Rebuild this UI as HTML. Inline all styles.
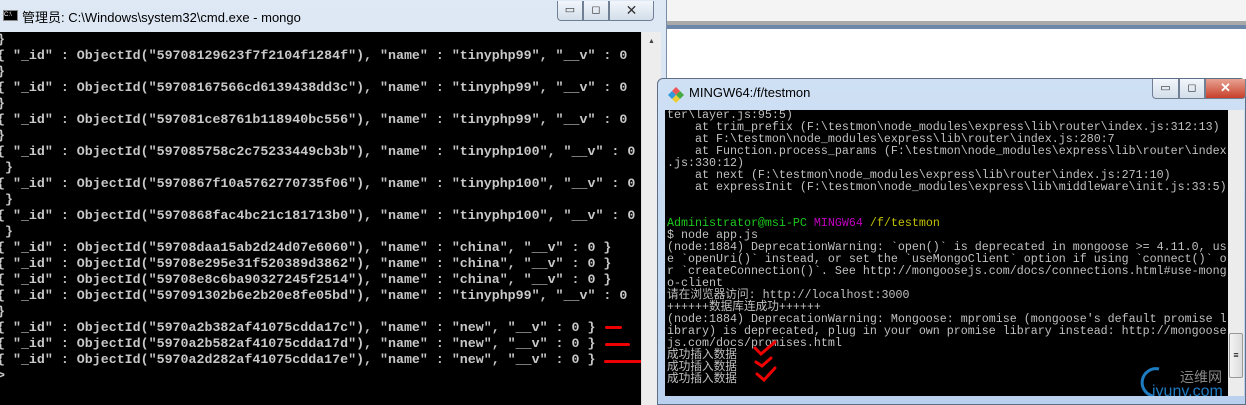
<!DOCTYPE html>
<html><head><meta charset="utf-8"><style>
*{margin:0;padding:0;box-sizing:border-box}
body{width:1246px;height:405px;overflow:hidden;position:relative;background:#fff;font-family:"Liberation Sans","Noto Sans CJK SC",sans-serif}
.abs{position:absolute}
#cmd{left:0;top:0;width:667px;height:405px;background:linear-gradient(#dfe9f5,#c4d6ec);border-right:1px solid #7a8ea8}
#cmdtitle{left:22px;top:7px;font-size:13px;color:#000}
#cmdbody{left:0;top:32px;width:641px;height:373px;background:#000;overflow:hidden}
#cmdbody pre{font-family:"Liberation Mono",monospace;font-size:13.3px;line-height:16px;color:#c8c8c8;position:absolute;left:-3px;top:0;font-weight:bold;letter-spacing:0}
#cmdsb{left:641px;top:32px;width:20px;height:373px;background:#ededed;border-left:1px solid #ddd}
.btn{position:absolute;top:1px;height:20px;border:1px solid #6f7f94;border-top:none;background:linear-gradient(#f2f6fb,#d3deea);font-size:11px;text-align:center;line-height:18px;color:#333}
#mg{left:657px;top:78px;width:589px;height:327px;background:linear-gradient(#cfe0f4,#b9d1ee);border:1px solid #5d6f86;border-radius:6px 6px 0 0}
#mgbody{left:665px;top:110px;width:563px;height:286px;background:#000;overflow:hidden}
#mgbody pre{font-family:"Liberation Mono","Noto Sans CJK SC",monospace;font-size:11.67px;line-height:12px;color:#c0c0c0;position:absolute;left:2px;top:-1px}
#mgsb{left:1228px;top:110px;width:16px;height:286px;background:#ececec}
</style></head><body>
<div class="abs" style="left:667px;top:0;width:579px;height:21px;background:#f4f4f4"></div>
<div class="abs" style="left:667px;top:21px;width:579px;height:4px;background:#a9a9a9"></div>
<div class="abs" style="left:667px;top:25px;width:579px;height:4px;background:#6d87aa"></div>

<div id="cmd" class="abs">
 <div class="abs" style="left:3px;top:10px;width:15px;height:11px;background:#000;border:1px solid #888;font-size:6px;color:#fff;line-height:9px">C:\</div>
 <div id="cmdtitle" class="abs">管理员: C:\Windows\system32\cmd.exe - mongo</div>
 <div class="btn" style="left:557px;width:26px;border-radius:0 0 0 4px">▭</div>
 <div class="btn" style="left:583px;width:26px">◻</div>
 <div class="btn" style="left:609px;width:45px;border-radius:0 0 4px 0;font-size:14px">✕</div>
 <div id="cmdbody" class="abs"><pre>}
{ "_id" : ObjectId("59708129623f7f2104f1284f"), "name" : "tinyphp99", "__v" : 0
}
{ "_id" : ObjectId("59708167566cd6139438dd3c"), "name" : "tinyphp99", "__v" : 0
}
{ "_id" : ObjectId("597081ce8761b118940bc556"), "name" : "tinyphp99", "__v" : 0
}
{ "_id" : ObjectId("597085758c2c75233449cb3b"), "name" : "tinyphp100", "__v" : 0
 }
{ "_id" : ObjectId("5970867f10a5762770735f06"), "name" : "tinyphp100", "__v" : 0
 }
{ "_id" : ObjectId("5970868fac4bc21c181713b0"), "name" : "tinyphp100", "__v" : 0
 }
{ "_id" : ObjectId("59708daa15ab2d24d07e6060"), "name" : "china", "__v" : 0 }
{ "_id" : ObjectId("59708e295e31f520389d3862"), "name" : "china", "__v" : 0 }
{ "_id" : ObjectId("59708e8c6ba90327245f2514"), "name" : "china", "__v" : 0 }
{ "_id" : ObjectId("597091302b6e2b20e8fe05bd"), "name" : "tinyphp99", "__v" : 0
}
{ "_id" : ObjectId("5970a2b382af41075cdda17c"), "name" : "new", "__v" : 0 }
{ "_id" : ObjectId("5970a2b582af41075cdda17d"), "name" : "new", "__v" : 0 }
{ "_id" : ObjectId("5970a2d282af41075cdda17e"), "name" : "new", "__v" : 0 }
&gt;</pre>
  <div class="abs" style="left:605px;top:294px;width:17px;height:3px;background:#e00;border-radius:2px"></div>
  <div class="abs" style="left:605px;top:311px;width:25px;height:3px;background:#e00;border-radius:2px"></div>
  <div class="abs" style="left:604px;top:328px;width:44px;height:3px;background:#e00;border-radius:2px"></div>
 </div>
 <div id="cmdsb" class="abs"><div style="font-size:7px;color:#444;text-align:center;margin-top:6px">▲</div></div>
</div>

<div id="mg" class="abs">
 <svg class="abs" style="left:10px;top:8px" width="16" height="16" viewBox="0 0 16 16"><path d="M8 0L12 4L8 8L4 4Z" fill="#e55"/><path d="M12 4L16 8L12 12L8 8Z" fill="#4a4"/><path d="M8 8L12 12L8 16L4 12Z" fill="#ec3"/><path d="M4 4L8 8L4 12L0 8Z" fill="#39d"/></svg>
 <div class="abs" style="left:31px;top:6px;font-size:13px;color:#000">MINGW64:/f/testmon</div>
 <div class="btn" style="left:494px;width:27px;border-radius:0 0 0 4px;top:0">▭</div>
 <div class="btn" style="left:521px;width:26px;top:0">◻</div>
 <div class="btn" style="left:547px;width:41px;top:0;background:linear-gradient(#e8a293,#c7402a);color:#fff;font-weight:bold;font-size:13px;border-radius:0 0 4px 0">✕</div>
</div>
<div id="mgbody" class="abs"><pre>ter\layer.js:95:5)
    at trim_prefix (F:\testmon\node_modules\express\lib\router\index.js:312:13)
    at F:\testmon\node_modules\express\lib\router\index.js:280:7
    at Function.process_params (F:\testmon\node_modules\express\lib\router\index
.js:330:12)
    at next (F:\testmon\node_modules\express\lib\router\index.js:271:10)
    at expressInit (F:\testmon\node_modules\express\lib\middleware\init.js:33:5)


<span style="color:#1cc91c">Administrator@msi-PC</span> <span style="color:#c000c0">MINGW64</span> <span style="color:#c0c000">/f/testmon</span>
$ node app.js
(node:1884) DeprecationWarning: `open()` is deprecated in mongoose &gt;= 4.11.0, us
e `openUri()` instead, or set the `useMongoClient` option if using `connect()` o
r `createConnection()`. See http://mongoosejs.com/docs/connections.html#use-mong
o-client
请在浏览器访问: http://localhost:3000
++++++数据库连成功++++++
(node:1884) DeprecationWarning: Mongoose: mpromise (mongoose's default promise l
ibrary) is deprecated, plug in your own promise library instead: http://mongoose
js.com/docs/promises.html
成功插入数据
成功插入数据
成功插入数据</pre>
 <svg class="abs" style="left:88px;top:228px" width="40" height="50" viewBox="0 0 40 50"><path d="M2 10L8 16L22 4M3 24L9 28L18 20M4 36L11 42L22 30" stroke="#e00" stroke-width="3" fill="none" stroke-linecap="round"/></svg>
 <svg class="abs" style="left:470px;top:255px" width="93" height="31" viewBox="0 0 93 31"><path d="M24 4A13 13 0 1 0 18 31" stroke="#1d7cc2" stroke-width="3" fill="none"/><text x="45" y="17" font-size="14" fill="#888" font-family="Noto Sans CJK SC,sans-serif">运维网</text><text x="17" y="31" font-size="16" fill="#1d7cc2" font-family="Liberation Sans,sans-serif">iyunv.com</text></svg>
</div>
<div id="mgsb" class="abs"><div style="position:absolute;left:1px;top:223px;width:14px;height:45px;background:linear-gradient(90deg,#f4f4f4,#dcdcdc);border:1px solid #999;border-radius:2px;font-size:9px;text-align:center;line-height:43px">≡</div></div>
</body></html>
